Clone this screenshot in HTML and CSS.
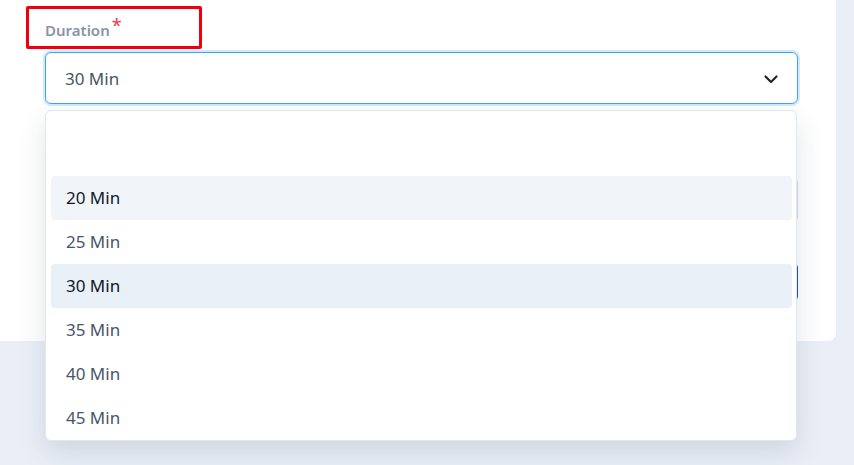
FILE: index.html
```html
<!DOCTYPE html>
<html lang="en">
<head>
    <meta charset="UTF-8">
    <meta name="viewport" content="width=device-width, initial-scale=1.0">
    <title>Duration</title>
    <link rel="stylesheet" href="styles.css">
</head>
<body>
    <div class="card">
        <div class="label-box">
            <span class="label">Duration</span><span class="required">*</span>
        </div>

        <div class="field">
            <div class="select">
                <span>30 Min</span>
                <svg class="chevron" width="16" height="16" viewBox="0 0 16 16">
                    <path d="M2.5 5.5 L8 11 L13.5 5.5" fill="none" stroke="#1f2430" stroke-width="2.2" stroke-linecap="round" stroke-linejoin="round"/>
                </svg>
            </div>

            <div class="behind-input"></div>
            <div class="behind-button"></div>

            <ul class="menu">
                <li class="option empty"></li>
                <li class="option hover">20 Min</li>
                <li class="option">25 Min</li>
                <li class="option selected">30 Min</li>
                <li class="option">35 Min</li>
                <li class="option">40 Min</li>
                <li class="option">45 Min</li>
            </ul>
        </div>
    </div>
</body>
</html>
```

FILE: styles.css
```css
html, body {
    height: 100%;
}
body {
    margin: 0;
    min-height: 465px;
    background-color: #eaeff7;
    font-family: "Noto Sans", "Open Sans", sans-serif;
}
.card {
    width: 836px;
    height: 341px;
    background-color: #ffffff;
    border-radius: 0 0 8px 0;
    padding-top: 6px;
    box-sizing: border-box;
}
.label-box {
    width: 176px;
    height: 43px;
    margin-left: 26px;
    padding: 11px 0 0 16px;
    box-sizing: border-box;
    border: 3px solid #f0000f;
    border-radius: 2px;
    line-height: 18px;
}
.label {
    font-size: 15px;
    font-weight: 600;
    color: #8b94a5;
}
.required {
    color: #f0364a;
    font-size: 18px;
    margin-left: 2px;
    position: relative;
    top: -4px;
}
.field {
    position: relative;
    margin: 3px 0 0 45px;
    width: 753px;
}
.select {
    height: 52px;
    border: 1px solid #3ea2ff;
    border-radius: 6px;
    box-shadow: 0 0 0 2px #d3e9ff;
    box-sizing: border-box;
    display: flex;
    align-items: center;
    justify-content: space-between;
    padding: 0 18px 0 19px;
    font-size: 17px;
    color: #4a5465;
}
.chevron {
    margin-top: 2px;
}
.behind-input {
    margin-top: 73px;
    height: 44px;
    border: 1px solid #d8dfe9;
    border-radius: 6px;
}
.behind-button {
    margin-top: 39px;
    height: 40px;
    background-color: #1d4fe0;
    border-radius: 6px;
}
.menu {
    position: absolute;
    top: 58px;
    left: 0;
    width: 752px;
    margin: 0;
    padding: 0 4px 0 5px;
    list-style: none;
    box-sizing: border-box;
    background-color: #ffffff;
    border: 1px solid #e1e7ef;
    border-radius: 6px;
    box-shadow: 0 12px 28px rgba(30, 45, 80, 0.13);
}
.option {
    height: 44px;
    line-height: 44px;
    padding-left: 15px;
    border-radius: 4px;
    font-size: 17px;
    color: #4a5568;
}
.option.empty {
    height: 65px;
}
.option.hover {
    background-color: #f1f5f9;
    color: #111a2c;
}
.option.selected {
    background-color: #eaf0f7;
    color: #0f172a;
}
```
